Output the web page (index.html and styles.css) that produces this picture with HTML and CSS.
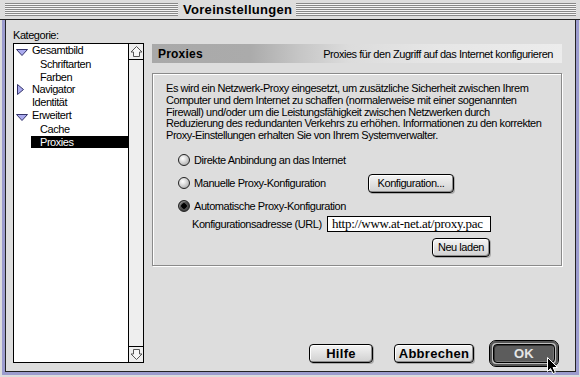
FILE: index.html
```html
<!DOCTYPE html>
<html lang="de">
  <head>
    <meta charset="UTF-8" />
    <title>Voreinstellungen</title>
    <link rel="stylesheet" href="styles.css">
  </head>
  <body>
    <div class="window">
      <div class="titlebar">
        <div class="stripes left"></div>
        <div class="title">Voreinstellungen</div>
        <div class="stripes right"></div>
      </div>

      <div class="frame">
        <div class="well">
          <div class="content">
            <!-- category tree -->
            <div class="sidebar">
              <div class="caption">Kategorie:</div>
              <div class="listbox">
                <ul class="tree">
                  <li class="item">
                    <span class="twisty"><svg width="12" height="7"><polygon points="0.5,0.5 11.5,0.5 6,6.5" class="tri"/></svg></span>
                    <span class="label">Gesamtbild</span>
                  </li>
                  <li class="item sub"><span class="label">Schriftarten</span></li>
                  <li class="item sub"><span class="label">Farben</span></li>
                  <li class="item">
                    <span class="twisty"><svg width="8" height="11" class="closed"><polygon points="0.5,0.5 6.5,5.5 0.5,10.5" class="tri"/></svg></span>
                    <span class="label">Navigator</span>
                  </li>
                  <li class="item"><span class="twisty"></span><span class="label">Identität</span></li>
                  <li class="item">
                    <span class="twisty"><svg width="12" height="7"><polygon points="0.5,0.5 11.5,0.5 6,6.5" class="tri"/></svg></span>
                    <span class="label">Erweitert</span>
                  </li>
                  <li class="item sub"><span class="label">Cache</span></li>
                  <li class="item sub selected"><span class="label">Proxies</span></li>
                </ul>
                <div class="scrollbar">
                  <div class="arrow up">
                    <svg width="13" height="13"><polygon points="6.5,1.5 12,7 9.5,7 9.5,11.5 3.5,11.5 3.5,7 1,7" /></svg>
                  </div>
                  <div class="track"></div>
                  <div class="arrow down">
                    <svg width="13" height="13"><polygon points="6.5,11.5 12,6 9.5,6 9.5,1.5 3.5,1.5 3.5,6 1,6" /></svg>
                  </div>
                </div>
              </div>
            </div>

            <!-- proxies panel -->
            <div class="main">
              <div class="panel-head">
                <span class="panel-name">Proxies</span>
                <span class="panel-desc">Proxies für den Zugriff auf das Internet konfigurieren</span>
              </div>

              <div class="groupbox">
                <p class="intro">
                  Es wird ein Netzwerk-Proxy eingesetzt, um zusätzliche Sicherheit zwischen Ihrem<br>
                  Computer und dem Internet zu schaffen (normalerweise mit einer sogenannten<br>
                  Firewall) und/oder um die Leistungsfähigkeit zwischen Netzwerken durch<br>
                  Reduzierung des redundanten Verkehrs zu erhöhen. Informationen zu den korrekten<br>
                  Proxy-Einstellungen erhalten Sie von Ihrem Systemverwalter.
                </p>

                <div class="radio-row">
                  <span class="radio"></span>
                  <span class="radio-label">Direkte Anbindung an das Internet</span>
                </div>
                <div class="radio-row">
                  <span class="radio"></span>
                  <span class="radio-label">Manuelle Proxy-Konfiguration</span>
                  <span class="btn small">Konfiguration...</span>
                </div>
                <div class="radio-row">
                  <span class="radio checked"></span>
                  <span class="radio-label">Automatische Proxy-Konfiguration</span>
                </div>

                <div class="auto-block">
                  <div class="url-row">
                    <span class="url-label">Konfigurationsadresse (URL)</span>
                    <span class="url-field">http://www.at-net.at/proxy.pac</span>
                  </div>
                  <span class="btn small reload">Neu laden</span>
                </div>
              </div>

              <div class="buttons">
                <span class="btn big help">Hilfe</span>
                <span class="btn big cancel">Abbrechen</span>
                <span class="default-ring"><span class="btn big pressed">OK</span></span>
              </div>
            </div>
          </div>
        </div>
      </div>

      <svg class="cursor" width="12" height="18">
        <polygon points="0.5,0.5 0.5,14.5 3.5,11.5 6,16.5 8.5,15.5 6,10.5 10.5,10.5" />
      </svg>
    </div>
  </body>
</html>
```

FILE: styles.css
```css
* {
  box-sizing: border-box;
}
body {
  margin: 0;
  font-family: "Liberation Sans", Arial, sans-serif;
  font-size: 11px;
  letter-spacing: -0.45px;
  color: #000;
  background: #dddddd;
}
.window {
  position: relative;
  width: 580px;
  height: 377px;
  display: flex;
  flex-direction: column;
  background: #dddddd;
  overflow: hidden;
}

/* title bar */
.titlebar {
  height: 20px;
  display: flex;
  align-items: center;
  padding: 0 4px 0 5px;
  border-bottom: 1px solid #222;
  background: #dddddd;
}
.stripes {
  height: 13px;
  background: repeating-linear-gradient(to bottom, #888 0 1px, #f4f4f4 1px 2px);
}
.stripes.left {
  width: 173px;
}
.stripes.right {
  flex: 1;
}
.title {
  padding: 0 4px 0 5px;
  font-weight: bold;
  font-size: 13px;
  letter-spacing: 0.3px;
  line-height: 15px;
}

/* window frame */
.frame {
  flex: 1;
  display: flex;
  padding: 0 1px 2px 2px;
}
.well {
  flex: 1;
  display: flex;
  border: 3px solid #9c9cce;
  border-top: 0;
}
.content {
  flex: 1;
  display: flex;
  border: 1px solid #222;
  border-top: 0;
  padding: 9px 0 0 7px;
  background: #dddddd;
}

/* sidebar */
.sidebar {
  width: 131px;
  display: flex;
  flex-direction: column;
}
.caption {
  height: 14px;
  line-height: 12px;
}
.listbox {
  height: 320px;
  display: flex;
  border: 1px solid #000;
  background: #fff;
}
.tree {
  flex: 1;
  list-style: none;
  margin: 0;
  padding: 0;
}
.item {
  height: 13px;
  display: flex;
  align-items: center;
}
.twisty {
  width: 18px;
  height: 13px;
  display: flex;
  align-items: center;
  padding-left: 2px;
}
.twisty svg {
  margin-top: 3px;
}
.twisty svg.closed {
  margin: 0 0 0 1px;
}
.tri {
  fill: #aaaaee;
  stroke: #33336a;
  stroke-width: 1;
}
.label {
  line-height: 13px;
}
.item.sub .label {
  flex: 1;
  height: 12px;
  line-height: 12px;
  margin-left: 17px;
  padding-left: 9px;
}
.item.selected .label {
  background: #000;
  color: #fff;
}
.scrollbar {
  width: 15px;
  display: flex;
  flex-direction: column;
  border-left: 1px solid #000;
  background: #eeeeee;
}
.arrow {
  height: 16px;
  display: flex;
  align-items: center;
  justify-content: center;
  background: #eeeeee;
}
.arrow.up {
  border-bottom: 1px solid #000;
}
.arrow.down {
  border-top: 1px solid #000;
}
.arrow polygon {
  fill: #f6f6f6;
  stroke: #555;
  stroke-width: 1;
}
.track {
  flex: 1;
}

/* main panel */
.main {
  width: 410px;
  margin-left: 8px;
  padding-top: 15px;
  display: flex;
  flex-direction: column;
}
.panel-head {
  height: 19px;
  display: flex;
  align-items: center;
  justify-content: space-between;
  padding: 0 9px 0 6px;
  background: linear-gradient(to right, #a9a9a9 0%, #ababab 24%, #c6c6c6 36%, #dcdcdc 48%, #e6e6e6 70%, #ececec 100%);
}
.panel-name {
  font-weight: bold;
  font-size: 12px;
  letter-spacing: 0.2px;
}
.groupbox {
  height: 193px;
  margin-top: 10px;
  padding: 9px 0 0 13px;
  border: 1px solid #8a8a8a;
  box-shadow: inset 1px 1px #fff, 1px 1px #fff;
}
.intro {
  margin: 0;
  line-height: 11.75px;
  white-space: nowrap;
}
.radio-row {
  height: 23px;
  display: flex;
  align-items: center;
  padding-left: 12px;
}
.intro + .radio-row {
  margin-top: 7px;
}
.radio {
  width: 12px;
  height: 12px;
  border-radius: 50%;
  border: 1px solid #222;
  background: radial-gradient(circle at 38% 35%, #fff 0, #e4e4e4 30%, #9a9a9a 100%);
}
.radio.checked {
  background: radial-gradient(circle, #000 0 2.5px, #555 3px, #222 100%);
  box-shadow: inset 1px 1px #888;
}
.radio-label {
  width: 174px;
  margin-left: 4px;
}
.btn {
  display: inline-flex;
  align-items: center;
  justify-content: center;
  height: 19px;
  border: 1px solid #000;
  border-radius: 4px;
  background: linear-gradient(#f4f4f4, #d0d0d0);
  box-shadow: inset 1px 1px #fff, inset -1px -1px #8c8c8c, 1px 1px #aaa;
  white-space: nowrap;
}
.btn.small {
  width: 86px;
}
.auto-block {
  width: 299px;
  margin-left: 26px;
  display: flex;
  flex-direction: column;
  align-items: flex-end;
}
.url-row {
  width: 100%;
  height: 16px;
  margin-top: -2px;
  display: flex;
  align-items: center;
  justify-content: space-between;
  white-space: nowrap;
}
.url-field {
  width: 164px;
  height: 16px;
  padding-left: 4px;
  border: 1px solid #000;
  background: #fff;
  font-family: "Liberation Serif", "Times New Roman", serif;
  font-size: 13px;
  letter-spacing: -0.25px;
  line-height: 14px;
  overflow: hidden;
}
.btn.reload {
  width: 58px;
  margin-top: 6px;
  margin-right: 1px;
}

/* dialog buttons */
.buttons {
  margin-top: 74px;
  height: 27px;
  display: flex;
  align-items: center;
  justify-content: flex-end;
  padding-right: 3px;
}
.btn.big {
  font-weight: bold;
  font-size: 13px;
  letter-spacing: 0.3px;
}
.btn.help {
  width: 64px;
}
.btn.cancel {
  width: 80px;
  margin-left: 21px;
}
.default-ring {
  width: 70px;
  height: 27px;
  margin-left: 15px;
  padding: 3px;
  border: 1px solid #000;
  border-radius: 7px;
  background: #bdbdbd;
  box-shadow: inset 0 0 0 2px #555;
  display: flex;
}
.default-ring .btn {
  flex: 1;
  height: 19px;
}
.btn.pressed {
  background: #5c5c5c;
  color: #e6e6e6;
  box-shadow: inset 1px 1px #333, inset -1px -1px #777;
}

.cursor {
  position: absolute;
  left: 547px;
  top: 357px;
}
.cursor polygon {
  fill: #000;
  stroke: #fff;
  stroke-width: 1;
}
```
